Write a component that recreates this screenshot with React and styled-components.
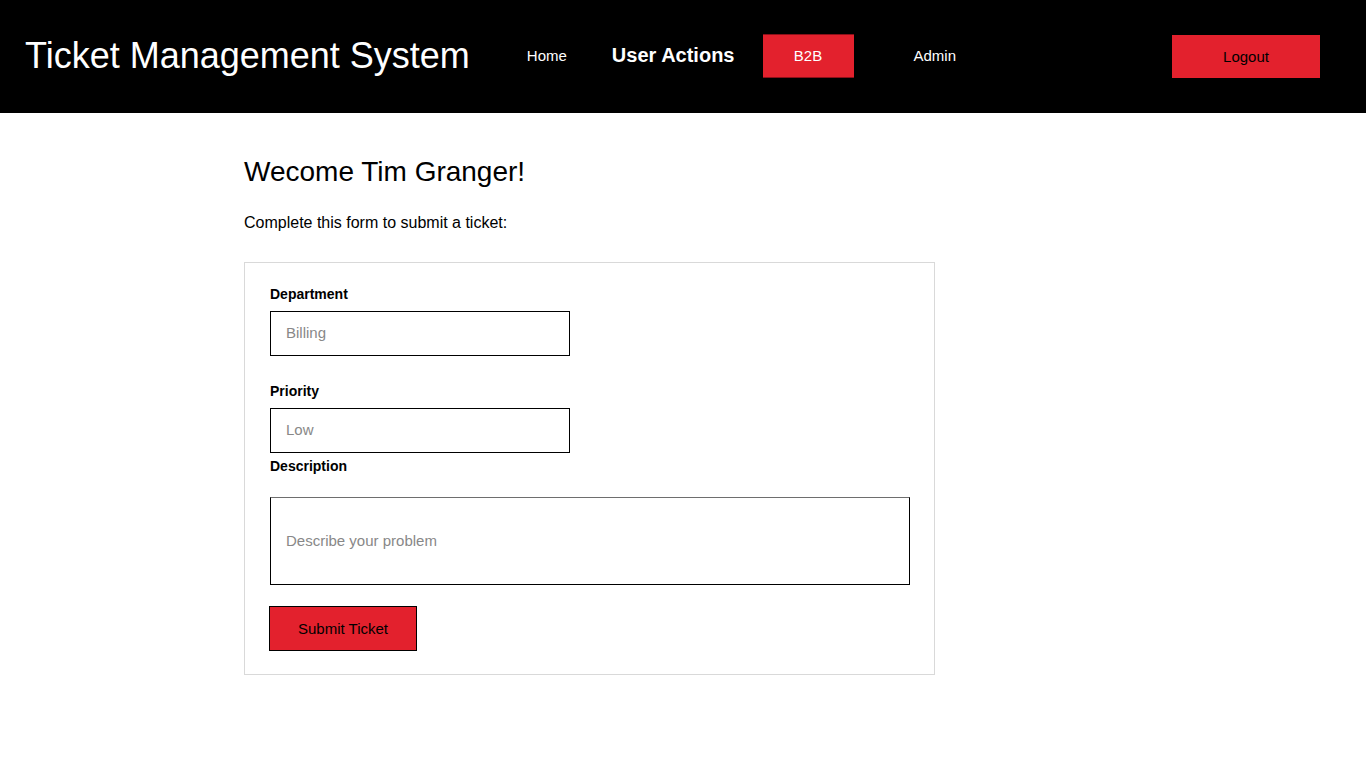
import React from "react";
import styled, { createGlobalStyle } from "styled-components";

const GlobalStyle = createGlobalStyle`
  html, body { margin: 0; padding: 0; background: #fff; }
  body { font-family: "Liberation Sans", Arial, sans-serif; color: #000; }
  * { box-sizing: border-box; }
`;

const RED = "#e3212d";

const Header = styled.header`
  height: 113px;
  background: #000;
  display: flex;
  align-items: center;
  padding: 0 46px 0 25px;
`;

const Title = styled.h1`
  margin: 0 0 2px;
  font-weight: 400;
  font-size: 36px;
  color: #fff;
  white-space: nowrap;
`;

const Nav = styled.nav`
  display: flex;
  align-items: center;
  flex: 1;
`;

const NavLink = styled.a`
  color: #fff;
  text-decoration: none;
  font-size: ${(p) => (p.$strong ? "20px" : "15px")};
  font-weight: ${(p) => (p.$strong ? 700 : 400)};
  margin-left: ${(p) => p.$ml}px;
  margin-bottom: 2px;
  white-space: nowrap;
`;

const NavButton = styled.a`
  display: flex;
  align-items: center;
  justify-content: center;
  width: 91px;
  height: 44px;
  margin-left: ${(p) => p.$ml}px;
  background: ${RED};
  border-top: 1px solid #8c1019;
  border-bottom: 1px solid #8c1019;
  color: #fff;
  font-size: 15px;
  text-decoration: none;
  margin-top: -2px;
`;

const LogoutButton = styled.button`
  margin-left: auto;
  width: 148px;
  height: 43px;
  background: ${RED};
  border: none;
  color: #000;
  font-family: "Liberation Sans", Arial, sans-serif;
  font-size: 15px;
  margin-top: 0;
`;

const Main = styled.main`
  width: 878px;
  margin: 0 auto;
  padding-top: 42px;
`;

const Welcome = styled.h2`
  margin: 0;
  font-weight: 400;
  font-size: 28px;
  line-height: 34px;
`;

const Intro = styled.p`
  margin: 24px 0 0;
  font-size: 16px;
  line-height: 20px;
`;

const Form = styled.form`
  margin-top: 29px;
  width: 691px;
  border: 1px solid #d9d9d9;
  padding: 23px 24px 23px 25px;
`;

const Label = styled.label`
  display: block;
  font-size: 14px;
  font-weight: 700;
  line-height: 16px;
  margin-top: ${(p) => p.$mt || 0}px;
  margin-bottom: ${(p) => p.$mb || 9}px;
`;

const Input = styled.input`
  display: block;
  width: 300px;
  height: 45px;
  border: 1px solid #000;
  padding: 0 15px 2px;
  font-family: "Liberation Sans", Arial, sans-serif;
  font-size: 15px;
  outline: none;
  &::placeholder { color: #888; }
`;

const Description = styled.input`
  display: block;
  width: 640px;
  height: 88px;
  border: 1px solid #000;
  border-top-color: #6e6e6e;
  padding: 0 15px 1px;
  font-family: "Liberation Sans", Arial, sans-serif;
  font-size: 15px;
  outline: none;
  &::placeholder { color: #888; }
`;

const Submit = styled.button`
  display: block;
  margin: 21px 0 0 -1px;
  width: 148px;
  height: 45px;
  background: ${RED};
  border: 1px solid #000;
  color: #000;
  font-family: "Liberation Sans", Arial, sans-serif;
  font-size: 15px;
`;

export default function App() {
  return (
    <>
      <GlobalStyle />
      <Header>
        <Title>Ticket Management System</Title>
        <Nav>
          <NavLink href="#" $ml={57}>Home</NavLink>
          <NavLink href="#" $ml={45} $strong>User Actions</NavLink>
          <NavButton href="#" $ml={28}>B2B</NavButton>
          <NavLink href="#" $ml={60}>Admin</NavLink>
          <LogoutButton type="button">Logout</LogoutButton>
        </Nav>
      </Header>
      <Main>
        <Welcome>Wecome Tim Granger!</Welcome>
        <Intro>Complete this form to submit a ticket:</Intro>
        <Form onSubmit={(e) => e.preventDefault()}>
          <Label htmlFor="dept">Department</Label>
          <Input id="dept" placeholder="Billing" />
          <Label htmlFor="prio" $mt={27}>Priority</Label>
          <Input id="prio" placeholder="Low" />
          <Label htmlFor="desc" $mt={5} $mb={23}>Description</Label>
          <Description id="desc" placeholder="Describe your problem" />
          <Submit type="submit">Submit Ticket</Submit>
        </Form>
      </Main>
    </>
  );
}
